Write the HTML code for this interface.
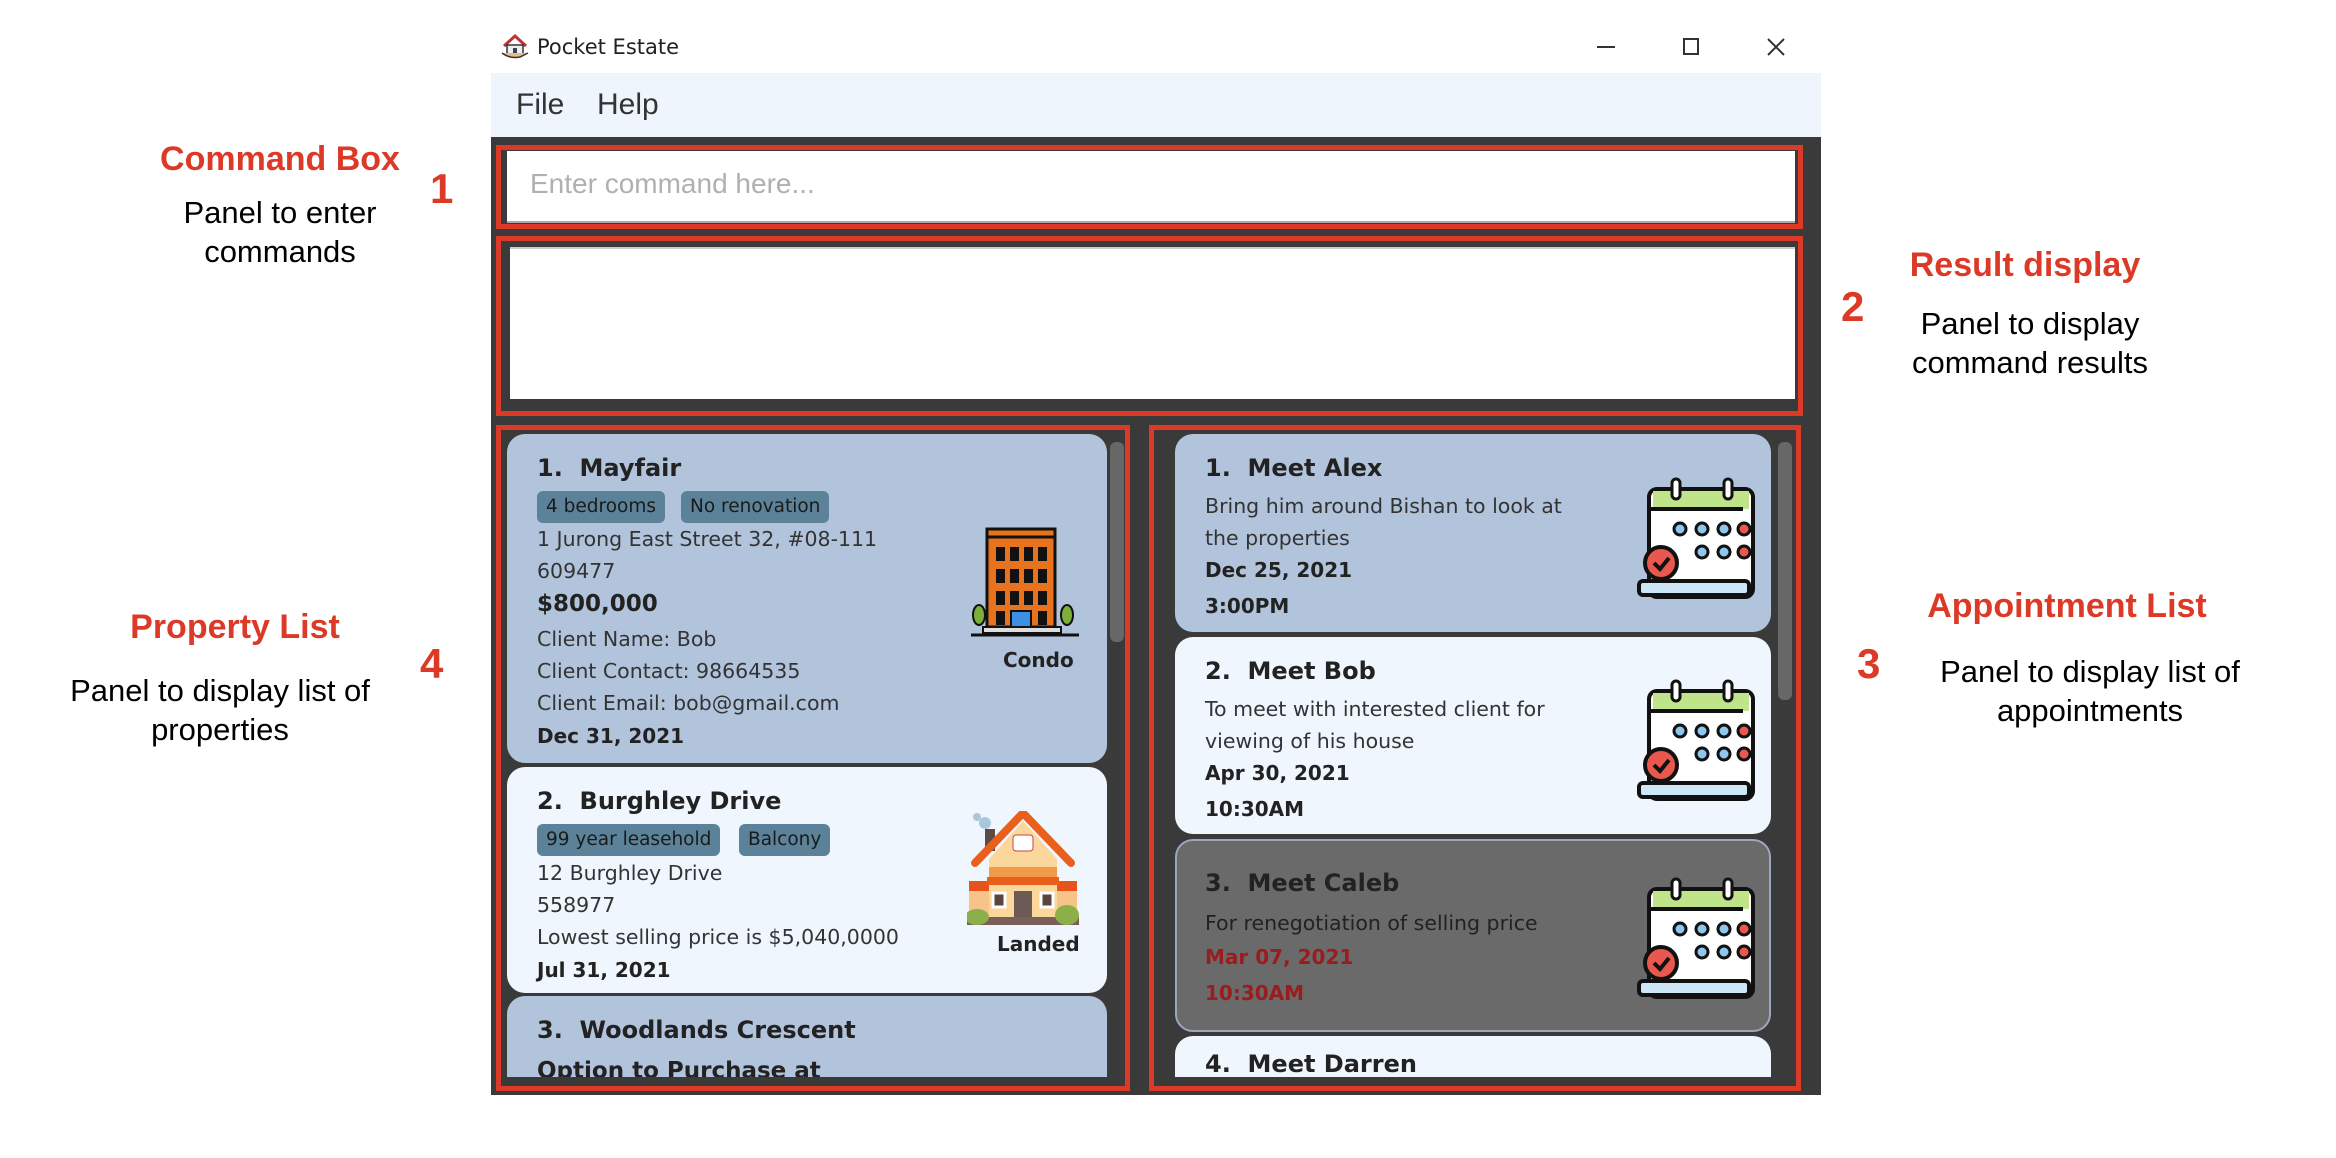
<!DOCTYPE html>
<html><head><meta charset="utf-8"><style>
*{margin:0;padding:0;box-sizing:border-box}
body{width:2336px;height:1158px;background:#fff;position:relative;overflow:hidden;font-family:"Liberation Sans",sans-serif}
.a{position:absolute;white-space:nowrap}
.h{color:#dc3a27;font-weight:bold;font-size:34px;text-align:center}
.n{color:#dc3a27;font-weight:bold;font-size:42px}
.p{color:#000;font-size:31px;text-align:center;line-height:39px}
.red{position:absolute;border:5px solid #dc3a27}
.card{position:absolute;border-radius:18px;overflow:hidden;font-family:"DejaVu Sans","Liberation Sans",sans-serif;color:#2a2a2a}
.card .a{font-size:20.5px;color:#333}
.t{font-weight:bold;font-size:24px!important;color:#222!important}
.b{font-weight:bold;font-size:20px!important;color:#222!important}
.tag{position:absolute;background:#5b8299;border-radius:6px;font-size:18.5px;color:#1a1a1a;line-height:32px;padding:0 9px;height:32px}
</style></head><body>

<div class="a h" style="left:150px;top:140px;width:260px">Command Box</div>
<div class="a p" style="left:130px;top:193px;width:300px">Panel to enter<br>commands</div>
<div class="a n" style="left:430px;top:165px">1</div>

<div class="a h" style="left:1880px;top:246px;width:290px">Result display</div>
<div class="a p" style="left:1880px;top:304px;width:300px">Panel to display<br>command results</div>
<div class="a n" style="left:1841px;top:283px">2</div>

<div class="a h" style="left:1917px;top:587px;width:300px">Appointment List</div>
<div class="a p" style="left:1925px;top:652px;width:330px">Panel to display list of<br>appointments</div>
<div class="a n" style="left:1857px;top:640px">3</div>

<div class="a h" style="left:110px;top:608px;width:250px">Property List</div>
<div class="a p" style="left:55px;top:671px;width:330px">Panel to display list of<br>properties</div>
<div class="a n" style="left:420px;top:640px">4</div>

<svg class="a" style="left:500px;top:33px" width="30" height="28" viewBox="0 0 30 28">
<path d="M4 13 L15 3 L26 13" fill="none" stroke="#b33" stroke-width="3"/>
<rect x="7" y="12" width="16" height="10" fill="#eee" stroke="#333" stroke-width="1.5"/>
<rect x="13" y="15" width="4" height="7" fill="#345"/>
<path d="M2 20 Q10 26 20 24 L28 20" fill="#e8b98a" stroke="#333" stroke-width="1.5"/>
</svg>
<div class="a" style="left:537px;top:35px;font-size:21px;font-family:'DejaVu Sans',sans-serif;color:#222">Pocket Estate</div>
<div class="a" style="left:1597px;top:46px;width:18px;height:2px;background:#333"></div>
<div class="a" style="left:1683px;top:38px;width:16px;height:17px;border:2px solid #333"></div>
<svg class="a" style="left:1766px;top:37px" width="20" height="20"><path d="M2 2L18 18M18 2L2 18" stroke="#333" stroke-width="2"/></svg>

<div class="a" style="left:491px;top:73px;width:1330px;height:64px;background:#eef5fc"></div>
<div class="a" style="left:516px;top:88px;font-size:30px;color:#333">File</div>
<div class="a" style="left:597px;top:88px;font-size:30px;color:#333">Help</div>

<div class="a" style="left:491px;top:137px;width:1330px;height:958px;background:#3a3a3a"></div>

<div class="a" style="left:507px;top:151px;width:1288px;height:72px;background:#fff;border-bottom:2px solid #aaa"></div>
<div class="a" style="left:530px;top:168px;font-size:28px;color:#b0b0b0">Enter command here...</div>
<div class="red" style="left:496px;top:145px;width:1307px;height:84px"></div>

<div class="a" style="left:510px;top:247px;width:1285px;height:152px;background:#fff;border-top:2px solid #ccc"></div>
<div class="red" style="left:496px;top:236px;width:1307px;height:180px"></div>

<div class="card" style="left:507px;top:434px;width:600px;height:329px;background:#b2c3dc">
 <div class="a t" style="left:30px;top:20px">1.&nbsp; Mayfair</div>
 <div class="tag" style="left:30px;top:57px">4 bedrooms</div>
 <div class="tag" style="left:174px;top:57px">No renovation</div>
 <div class="a" style="left:30px;top:93px">1 Jurong East Street 32, #08-111</div>
 <div class="a" style="left:30px;top:125px">609477</div>
 <div class="a b" style="left:30px;top:157px;font-size:23px!important">$800,000</div>
 <div class="a" style="left:30px;top:193px">Client Name: Bob</div>
 <div class="a" style="left:30px;top:225px">Client Contact: 98664535</div>
 <div class="a" style="left:30px;top:257px">Client Email: bob@gmail.com</div>
 <div class="a b" style="left:30px;top:290px">Dec 31, 2021</div>
 <svg class="a" style="left:462px;top:93px" width="112" height="112" viewBox="0 0 112 112">
  <rect x="18" y="2" width="68" height="98" fill="#e8731f" stroke="#111" stroke-width="3"/>
  <rect x="18" y="2" width="68" height="8" fill="#e8731f" stroke="#111" stroke-width="3"/>
  <g fill="#111">
   <rect x="27" y="20" width="9" height="14"/><rect x="41" y="20" width="9" height="14"/><rect x="55" y="20" width="9" height="14"/><rect x="69" y="20" width="9" height="14"/>
   <rect x="27" y="42" width="9" height="14"/><rect x="41" y="42" width="9" height="14"/><rect x="55" y="42" width="9" height="14"/><rect x="69" y="42" width="9" height="14"/>
   <rect x="27" y="64" width="9" height="14"/><rect x="41" y="64" width="9" height="14"/><rect x="55" y="64" width="9" height="14"/><rect x="69" y="64" width="9" height="14"/>
   <rect x="27" y="84" width="9" height="14"/><rect x="69" y="84" width="9" height="14"/>
  </g>
  <rect x="42" y="84" width="20" height="16" fill="#3d8fe0" stroke="#111" stroke-width="2"/>
  <ellipse cx="10" cy="88" rx="6" ry="10" fill="#7cae3a" stroke="#111" stroke-width="2"/>
  <ellipse cx="98" cy="88" rx="6" ry="10" fill="#7cae3a" stroke="#111" stroke-width="2"/>
  <rect x="14" y="100" width="78" height="6" fill="#ddd" stroke="#111" stroke-width="2"/>
  <line x1="2" y1="108" x2="110" y2="108" stroke="#111" stroke-width="3"/>
 </svg>
 <div class="a b" style="left:496px;top:214px;width:50px;text-align:center;font-size:20px!important">Condo</div>
</div>

<div class="card" style="left:507px;top:767px;width:600px;height:226px;background:#eff6fd">
 <div class="a t" style="left:30px;top:20px">2.&nbsp; Burghley Drive</div>
 <div class="tag" style="left:30px;top:57px">99 year leasehold</div>
 <div class="tag" style="left:232px;top:57px">Balcony</div>
 <div class="a" style="left:30px;top:94px">12 Burghley Drive</div>
 <div class="a" style="left:30px;top:126px">558977</div>
 <div class="a" style="left:30px;top:158px">Lowest selling price is $5,040,0000</div>
 <div class="a b" style="left:30px;top:191px">Jul 31, 2021</div>
 <svg class="a" style="left:460px;top:44px" width="112" height="116" viewBox="0 0 112 116">
  <circle cx="10" cy="6" r="4" fill="#aac8dc"/><circle cx="18" cy="12" r="6" fill="#aac8dc"/>
  <rect x="18" y="18" width="10" height="22" fill="#5d4a44"/>
  <rect x="2" y="72" width="108" height="34" fill="#f6c488"/>
  <rect x="2" y="70" width="26" height="10" fill="#e8521c"/><rect x="84" y="70" width="26" height="10" fill="#e8521c"/>
  <path d="M22 48 L56 10 L90 48 L90 106 L22 106Z" fill="#fbd79c"/>
  <path d="M8 52 L56 2 L104 52" fill="none" stroke="#e8601c" stroke-width="8" stroke-linecap="round"/>
  <rect x="22" y="56" width="68" height="14" fill="#f09a4a"/>
  <rect x="20" y="66" width="72" height="8" fill="#e8601c"/>
  <rect x="46" y="24" width="20" height="16" rx="3" fill="#fff" stroke="#c44"/>
  <rect x="47" y="80" width="18" height="28" fill="#6b5a55"/>
  <rect x="26" y="82" width="12" height="14" fill="#5a4543" stroke="#fff" stroke-width="3"/>
  <rect x="74" y="82" width="12" height="14" fill="#5a4543" stroke="#fff" stroke-width="3"/>
  <rect x="0" y="106" width="112" height="8" fill="#7a5f58"/>
  <ellipse cx="10" cy="106" rx="12" ry="8" fill="#8bb04a"/><ellipse cx="100" cy="104" rx="12" ry="10" fill="#8bb04a"/>
 </svg>
 <div class="a b" style="left:490px;top:165px;width:60px;text-align:center;font-size:20px!important">Landed</div>
</div>

<div class="card" style="left:507px;top:996px;width:600px;height:81px;background:#b2c3dc;border-radius:18px 18px 0 0">
 <div class="a t" style="left:30px;top:20px">3.&nbsp; Woodlands Crescent</div>
 <div class="a b" style="left:30px;top:62px;font-size:23px!important">Option to Purchase at</div>
</div>
<div class="a" style="left:1110px;top:442px;width:14px;height:200px;background:#676767;border-radius:6px"></div>
<div class="red" style="left:496px;top:425px;width:634px;height:666px"></div>

<svg width="0" height="0" style="position:absolute"><defs>
<g id="cal">
 <rect x="14" y="12" width="104" height="108" rx="8" fill="#fff" stroke="#111" stroke-width="4"/>
 <path d="M18 14 H114 V32 H18Z" fill="#bfe48a"/>
 <line x1="16" y1="32" x2="108" y2="32" stroke="#111" stroke-width="4"/>
 <rect x="37" y="2" width="8" height="20" rx="4" fill="#fff" stroke="#111" stroke-width="3"/>
 <rect x="89" y="2" width="8" height="20" rx="4" fill="#fff" stroke="#111" stroke-width="3"/>
 <g stroke="#111" stroke-width="3">
  <circle cx="45" cy="52" r="6" fill="#8ec7ee"/><circle cx="67" cy="52" r="6" fill="#8ec7ee"/><circle cx="89" cy="52" r="6" fill="#8ec7ee"/><circle cx="109" cy="52" r="6" fill="#e8584f"/>
  <circle cx="67" cy="75" r="6" fill="#8ec7ee"/><circle cx="89" cy="75" r="6" fill="#8ec7ee"/><circle cx="109" cy="75" r="6" fill="#e8584f"/>
 </g>
 <circle cx="26" cy="86" r="16" fill="#e8584f" stroke="#111" stroke-width="4"/>
 <path d="M19 86 L25 92 L34 81" fill="none" stroke="#111" stroke-width="4"/>
 <rect x="4" y="104" width="110" height="14" rx="4" fill="#cde6f8" stroke="#111" stroke-width="4"/>
</g></defs></svg>

<div class="card" style="left:1175px;top:434px;width:596px;height:198px;background:#b2c3dc">
 <div class="a t" style="left:30px;top:20px">1.&nbsp; Meet Alex</div>
 <div class="a" style="left:30px;top:60px">Bring him around Bishan to look at</div>
 <div class="a" style="left:30px;top:92px">the properties</div>
 <div class="a b" style="left:30px;top:124px">Dec 25, 2021</div>
 <div class="a b" style="left:30px;top:160px">3:00PM</div>
 <svg class="a" style="left:460px;top:43px" width="122" height="122"><use href="#cal"/></svg>
</div>
<div class="card" style="left:1175px;top:637px;width:596px;height:197px;background:#eff6fd">
 <div class="a t" style="left:30px;top:20px">2.&nbsp; Meet Bob</div>
 <div class="a" style="left:30px;top:60px">To meet with interested client for</div>
 <div class="a" style="left:30px;top:92px">viewing of his house</div>
 <div class="a b" style="left:30px;top:124px">Apr 30, 2021</div>
 <div class="a b" style="left:30px;top:160px">10:30AM</div>
 <svg class="a" style="left:460px;top:42px" width="122" height="122"><use href="#cal"/></svg>
</div>
<div class="card" style="left:1175px;top:839px;width:596px;height:193px;background:#6a6a6a;border:2px solid #9aa8bc">
 <div class="a t" style="left:28px;top:28px">3.&nbsp; Meet Caleb</div>
 <div class="a" style="left:28px;top:70px;color:#222!important">For renegotiation of selling price</div>
 <div class="a b" style="left:28px;top:104px;color:#9b1c1c!important">Mar 07, 2021</div>
 <div class="a b" style="left:28px;top:140px;color:#9b1c1c!important">10:30AM</div>
 <svg class="a" style="left:458px;top:36px" width="122" height="122"><use href="#cal"/></svg>
</div>
<div class="card" style="left:1175px;top:1036px;width:596px;height:41px;background:#eff6fd;border-radius:18px 18px 0 0">
 <div class="a t" style="left:30px;top:14px">4.&nbsp; Meet Darren</div>
</div>
<div class="a" style="left:1778px;top:442px;width:14px;height:258px;background:#676767;border-radius:6px"></div>
<div class="red" style="left:1149px;top:425px;width:652px;height:666px"></div>

</body></html>
